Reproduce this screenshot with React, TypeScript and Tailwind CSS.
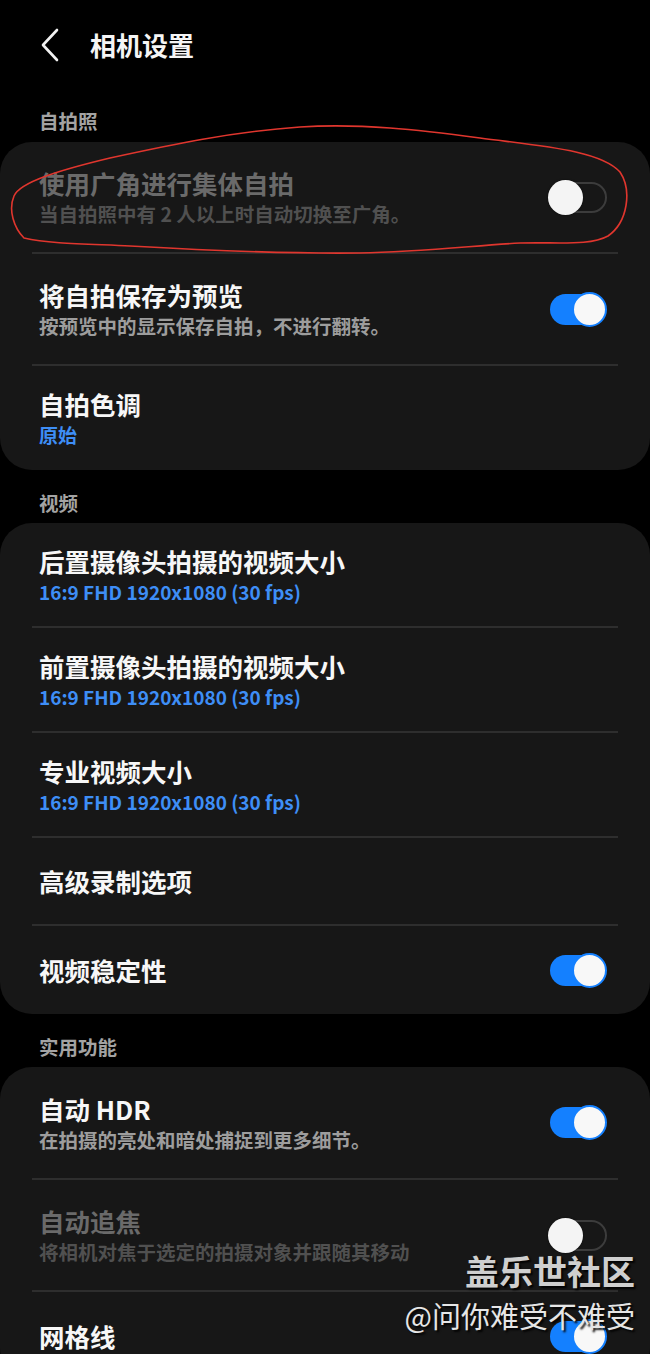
import React from 'react';

type Row = {
  title: string;
  sub?: string;
  subBlue?: boolean;
  toggle?: 'on' | 'off';
  disabled?: boolean;
  h: string;
};

const cjk = { fontFamily: '"Noto Sans CJK SC", "Noto Sans", sans-serif' };

function Toggle({ on }: { on: boolean }) {
  if (on) {
    return (
      <div className="relative w-[59px] h-[35px] shrink-0">
        <div className="absolute left-[2px] top-[2px] w-[56px] h-[31px] rounded-full bg-[#1480ff]" />
        <div className="absolute right-0 top-0 w-[35px] h-[35px] rounded-full bg-[#f8f8f8] border-[2px] border-[#1480ff]" />
      </div>
    );
  }
  return (
    <div className="relative w-[59px] h-[35px] shrink-0">
      <div className="absolute right-0 top-[2px] w-[57px] h-[31px] rounded-full border-[2px] border-[#3c3c3c]" />
      <div className="absolute left-0 top-0 w-[35px] h-[35px] rounded-full bg-[#f4f4f4] shadow-[0_0_2px_rgba(0,0,0,0.6)]" />
    </div>
  );
}

function SettingRow({ row }: { row: Row }) {
  const titleColor = row.disabled ? 'text-[#6a6a6a]' : 'text-[#f7f7f7]';
  const subColor = row.disabled
    ? 'text-[#505050]'
    : row.subBlue
      ? 'text-[#3e8ef6]'
      : 'text-[#9d9d9d]';
  const subSize = row.subBlue ? 'text-[19px]' : 'text-[19.5px]';
  return (
    <div className={`flex items-center justify-between pl-[39px] pr-[43px] ${row.h}`}>
      <div className="flex flex-col">
        <div className={`text-[25.5px] leading-[34px] font-bold ${titleColor}`}>{row.title}</div>
        {row.sub && (
          <div className={`${subSize} leading-[28px] font-bold ${subColor}`}>{row.sub}</div>
        )}
      </div>
      {row.toggle && <Toggle on={row.toggle === 'on'} />}
    </div>
  );
}

function Card({ rows }: { rows: Row[] }) {
  return (
    <div className="w-full rounded-[32px] bg-[#171717] overflow-hidden">
      {rows.map((r, i) => (
        <div key={r.title}>
          {i > 0 && <div className="mx-[32px] h-[2px] bg-[#2e2e2e]" />}
          <SettingRow row={r} />
        </div>
      ))}
    </div>
  );
}

function SectionLabel({ text, top }: { text: string; top: string }) {
  return (
    <div className={`px-[39px] ${top} text-[19.5px] leading-[24px] font-bold text-[#a3a3a3]`}>
      {text}
    </div>
  );
}

const selfie: Row[] = [
  { title: '使用广角进行集体自拍', sub: '当自拍照中有 2 人以上时自动切换至广角。', toggle: 'off', disabled: true, h: 'h-[110px]' },
  { title: '将自拍保存为预览', sub: '按预览中的显示保存自拍，不进行翻转。', toggle: 'on', h: 'h-[110px]' },
  { title: '自拍色调', sub: '原始', subBlue: true, h: 'h-[104px]' },
];

const video: Row[] = [
  { title: '后置摄像头拍摄的视频大小', sub: '16:9 FHD 1920x1080 (30 fps)', subBlue: true, h: 'h-[103px]' },
  { title: '前置摄像头拍摄的视频大小', sub: '16:9 FHD 1920x1080 (30 fps)', subBlue: true, h: 'h-[103px]' },
  { title: '专业视频大小', sub: '16:9 FHD 1920x1080 (30 fps)', subBlue: true, h: 'h-[103px]' },
  { title: '高级录制选项', h: 'h-[86px]' },
  { title: '视频稳定性', toggle: 'on', h: 'h-[88px]' },
];

const utility: Row[] = [
  { title: '自动 HDR', sub: '在拍摄的亮处和暗处捕捉到更多细节。', toggle: 'on', h: 'h-[111px]' },
  { title: '自动追焦', sub: '将相机对焦于选定的拍摄对象并跟随其移动', toggle: 'off', disabled: true, h: 'h-[110px]' },
  { title: '网格线', toggle: 'on', h: 'h-[88px]' },
];

export default function App() {
  return (
    <div className="relative w-[650px] h-[1354px] overflow-hidden bg-black" style={cjk}>
      <div className="flex items-center h-[90px] pl-[40px]">
        <svg width="20" height="34" viewBox="0 0 20 34" className="shrink-0">
          <path d="M17 2 L3 17 L17 32" fill="none" stroke="#f2f2f2" strokeWidth="2.6" strokeLinecap="round" strokeLinejoin="round" />
        </svg>
        <div className="ml-[30px] text-[26px] leading-[32px] font-bold text-[#f5f5f5]">相机设置</div>
      </div>

      <SectionLabel text="自拍照" top="pt-[19px] pb-[9px]" />
      <Card rows={selfie} />

      <SectionLabel text="视频" top="pt-[21px] pb-[8px]" />
      <Card rows={video} />

      <SectionLabel text="实用功能" top="pt-[21px] pb-[8px]" />
      <Card rows={utility} />

      <svg className="absolute left-0 top-0 pointer-events-none" width="650" height="300" viewBox="0 0 650 300">
        <path
          d="M24 238 C14 228 8 210 14 196 C20 182 60 170 110 158 C170 145 230 132 300 127 C360 123 420 130 480 138 C540 146 600 150 620 172 C632 190 628 222 608 236 C590 246 560 242 520 243 C470 246 420 252 360 253 C280 254 200 250 130 246 C90 244 50 244 24 238"
          fill="none"
          stroke="#e0362e"
          strokeWidth="1.6"
          strokeLinecap="round"
        />
      </svg>

      <div className="absolute right-[15px] top-[1249px] flex flex-col items-end pointer-events-none">
        <div className="text-[34px] leading-[44px] font-bold text-[#cfcfcf] [text-shadow:2px_2px_2px_rgba(0,0,0,0.9)]">
          盖乐世社区
        </div>
        <div className="mt-[2px] text-[29px] leading-[40px] font-normal text-[#e6e6e6] [text-shadow:2px_2px_2px_rgba(0,0,0,0.9)]">
          @问你难受不难受
        </div>
      </div>
    </div>
  );
}
